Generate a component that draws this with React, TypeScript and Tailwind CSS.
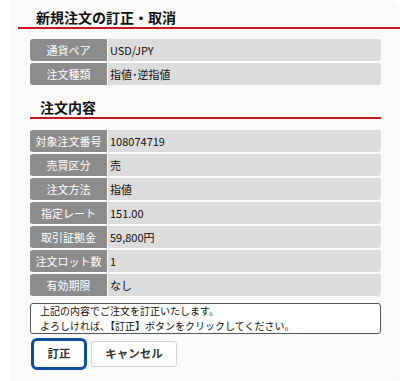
import React from "react";

const font = { fontFamily: '"Noto Sans CJK JP", "Noto Sans", sans-serif' };

function Row({ label, value }: { label: string; value: string }) {
  return (
    <div className="flex h-[22px] gap-px">
      <div className="w-[77px] shrink-0 bg-[#8c8c8c] text-white rounded-l-[3px] flex items-center justify-center text-[11px] leading-none">
        {label}
      </div>
      <div className="flex-1 bg-[#dcdcdc] rounded-r-[3px] flex items-center pl-[2px] text-[11px] leading-none text-[#111]">
        {value}
      </div>
    </div>
  );
}

export default function App() {
  const rows2: [string, string][] = [
    ["対象注文番号", "108074719"],
    ["売買区分", "売"],
    ["注文方法", "指値"],
    ["指定レート", "151.00"],
    ["取引証拠金", "59,800円"],
    ["注文ロット数", "1"],
    ["有効期限", "なし"],
  ];
  return (
    <div className="w-[400px] h-[381px] bg-white flex" style={font}>
      <div className="ml-[11px] flex-1 bg-[#fafafa] rounded-r-[14px] flex flex-col">
        <div className="pl-[25px] pt-[7px] text-[14px] font-bold leading-[20px] text-[#111]">
          新規注文の訂正・取消
        </div>
        <div className="ml-[7px] h-[2px] bg-[#c8161d]" />
        <div className="mx-[19px] mt-[10px] flex flex-col gap-[2px]">
          <Row label="通貨ペア" value="USD/JPY" />
          <Row label="注文種類" value="指値･逆指値" />
        </div>
        <div className="mx-[19px] mt-[12px] pl-[10px] text-[14px] font-bold leading-[20px] text-[#111]">
          注文内容
        </div>
        <div className="mx-[19px] h-[2px] bg-[#c8161d]" />
        <div className="mx-[19px] mt-[11px] flex flex-col gap-[2px]">
          {rows2.map(([l, v]) => (
            <Row key={l} label={l} value={v} />
          ))}
        </div>
        <div className="mx-[19px] mt-[7px] h-[31px] bg-white border border-[#555] rounded-[3px] px-[9px] flex flex-col justify-center text-[10px] leading-[14.5px] text-[#111]">
          <div>上記の内容でご注文を訂正いたします。</div>
          <div>よろしければ、【訂正】ボタンをクリックしてください。</div>
        </div>
        <div className="ml-[20px] mt-[4px] flex items-center gap-[4px]">
          <button className="w-[56px] h-[32px] border-[3px] border-[#0a4ea0] rounded-[6px] bg-white text-[11.5px] font-bold text-[#333]">
            訂正
          </button>
          <button className="w-[86px] h-[26px] border border-[#d4d4d4] rounded-[3px] bg-white text-[11.5px] font-bold text-[#333]">
            キャンセル
          </button>
        </div>
      </div>
    </div>
  );
}
